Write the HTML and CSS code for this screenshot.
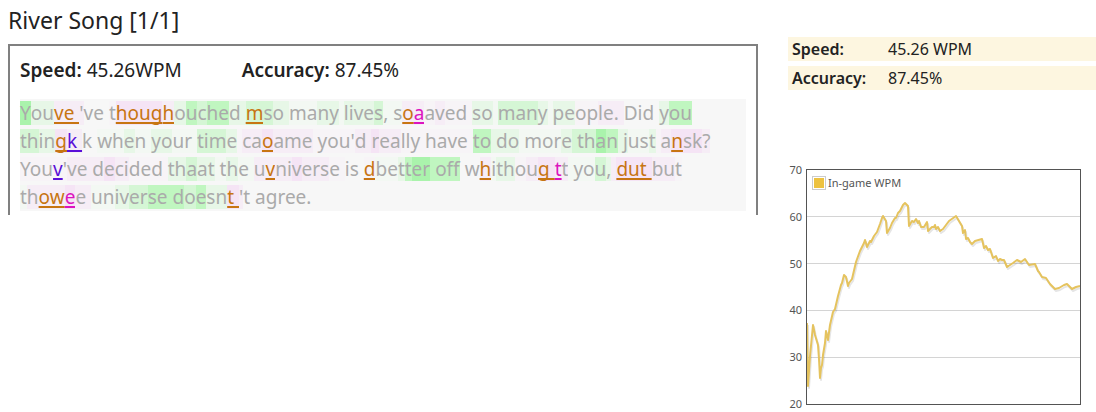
FILE: index.html
```
<!DOCTYPE html>
<html lang="en">
<head>
<meta charset="utf-8">
<title>River Song [1/1]</title>
<link rel="stylesheet" href="styles.css">
</head>
<body>
<div class="page">
<main class="replay">
<h1 class="title">River Song [1/1]</h1>
<section class="panel">
<div class="stats"><p class="stat"><b>Speed:</b> 45.26WPM</p><p class="stat"><b>Accuracy:</b> 87.45%</p></div>
<p class="typed"><span class="g4">Y</span><span class="g1">ou</span><span class="p1 late">ve </span><span class="p1">'</span><span>ve </span><span class="p0">t</span><span class="p2 late">houg</span><span class="p1 late">h</span><span class="g1">o</span><span class="g3">u</span><span class="g2">c</span><span class="g3">he</span><span class="g1">d </span><span class="g2 late">m</span><span class="g2">s</span><span class="g1">o </span><span class="g0">ma</span><span class="g1">ny</span><span class="g0"> </span><span class="g1">live</span><span class="g2">s</span><span class="g0">, s</span><span class="p1 late">o</span><span class="p1 skip">a</span><span class="p0">a</span><span class="p1">v</span><span class="p0">ed </span><span class="g1">so</span><span class="g0"> </span><span class="g2">man</span><span class="g1">y</span><span class="g0"> </span><span class="g1">pe</span><span class="p0">op</span><span class="p1">le. </span><span>Did </span><span class="g1">y</span><span class="g3">ou</span><br>
<span class="g2">th</span><span class="g1">in</span><span class="p2 late">g</span><span class="p1 extra">k </span><span>k </span><span class="g0">wh</span><span class="g1">e</span><span class="g0">n </span><span class="g1">yo</span><span class="g0">ur </span><span class="g2">tim</span><span class="g1">e</span><span class="p0"> </span><span class="p1">ca</span><span class="p2 late">o</span><span class="p1">ame</span><span class="p0"> you'</span><span class="p1">d </span><span class="p2">r</span><span class="p1">ea</span><span class="p0">lly </span><span class="p0">have </span><span class="g3">to</span><span class="g1"> do</span><span class="g0"> mor</span><span class="g1">e</span><span class="g2"> th</span><span class="g4">a</span><span class="g3">n</span><span class="g1"> j</span><span class="g0">us</span><span class="g1">t</span><span class="p0"> </span><span class="p1">a</span><span class="p2 late">n</span><span class="p2">sk</span><span class="p1">?</span><br>
<span class="p0">You</span><span class="p0 extra">v</span><span class="p0">'</span><span class="p1">ve d</span><span class="p2">e</span><span class="p1">ci</span><span class="p0">ded </span><span class="g1">th</span><span class="g2">a</span><span class="g1">at</span><span class="g0"> t</span><span class="g1">h</span><span class="g0">e </span><span class="p1">u</span><span class="p1 late">v</span><span class="p1">ni</span><span class="p2">v</span><span class="p1">ers</span><span class="p0">e </span><span>is </span><span class="p0 late">d</span><span class="g0">be</span><span class="g1">t</span><span class="g3">t</span><span class="g4">er</span><span class="g3"> off</span><span> w</span><span class="p1 late">h</span><span class="g0">i</span><span class="g1">th</span><span class="p0">o</span><span class="p1">u</span><span class="p2 late">g </span><span class="p1 skip">t</span><span class="p1">t</span><span class="g0"> yo</span><span class="g2">u</span><span class="g1">,</span><span class="p1"> </span><span class="p2 late">dut </span><span class="p1">bu</span><span class="p0">t</span><br>
<span class="g0">t</span><span class="p1">h</span><span class="p1 late">ow</span><span class="p2 skip">e</span><span class="p1">e </span><span class="g0">un</span><span class="g1">iv</span><span class="g2">er</span><span class="g3">se d</span><span class="g2">o</span><span class="g3">e</span><span class="g1">sn</span><span class="p2 late">t </span><span class="p1">'</span><span>t agree.</span></p>
</section>
</main>
<aside class="summary">
<dl class="facts">
<div class="fact"><dt>Speed:</dt><dd>45.26 WPM</dd></div>
<div class="fact"><dt>Accuracy:</dt><dd>87.45%</dd></div>
</dl>
<svg class="chart" viewBox="0 0 308 251" role="img" aria-label="In-game WPM">
<defs><path id="wpm" d="M19 163L20 226L22 196L25 165L27 175L30 185L31 199L32 218L33 208L34 205L35 195L37 183L38 171L40 180L42 165L45 152L47 149L50 136L53 125L54 123L56 115L58 117L60 126L61 123L64 119L68 102L72 91L76 83L77 80L78 83L79 87L81 83L82 81L83 82L84 80L86 76L89 72L92 64L94 58L95 56L98 61L99 73L102 68L104 63L107 58L108 58L110 53L112 51L115 45L117 43L120 46L121 66L124 61L126 62L128 59L130 63L131 61L133 67L136 67L139 62L140 71L142 69L144 67L146 67L147 65L148 69L150 67L152 71L155 69L161 61L168 56L174 66L175 73L177 70L178 79L180 78L182 82L184 84L187 81L194 79L196 88L198 86L200 90L202 89L205 98L208 96L210 101L212 99L214 100L216 100L219 107L225 103L229 100L233 102L237 99L241 105L247 104L250 111L251 112L254 117L258 118L262 124L267 129L271 128L276 125L279 124L284 129L288 127L292 126"/></defs>
<g class="grid"><path d="M19 56.500H292M19 103.500H292M19 150.500H292M19 197.500H292"/></g>
<g class="axis"><text x="14" y="14">70</text><text x="14" y="61">60</text><text x="14" y="108">50</text><text x="14" y="154">40</text><text x="14" y="201">30</text><text x="14" y="248">20</text></g>
<g class="curve">
<use class="shade" href="#wpm" x="1" y="2"/>
<use class="line" href="#wpm"/>
</g>
<rect class="frame" x="18.500" y="9.500" width="274" height="235"/>
<rect class="swatch-edge" x="24.500" y="16.500" width="13" height="13"/>
<rect class="swatch" x="26" y="18" width="10" height="10"/>
<text class="legend" x="40" y="27">In-game WPM</text>
</svg>
</aside>
</div>
</body>
</html>
```
FILE: styles.css
```
body {
  margin: 0;
  background: #fff;
  color: #222;
  font-family: "Noto Sans", "Open Sans", sans-serif;
}
.page {
  display: grid;
  grid-template-columns: 750fr 308fr;
  gap: 30px;
  padding-left: 8px;
}
.title {
  margin: 0;
  padding: 4px 0 8px;
  font-size: 23px;
  font-weight: 400;
  line-height: 32px;
}
.panel {
  border: 2px solid #808080;
  border-bottom: 0;
  padding: 9px 10px 4px;
}
.stats {
  display: flex;
  gap: 60px;
  font-size: 19px;
  line-height: 30px;
}
.stat { margin: 0; }
.stat b { font-weight: 600; }
.typed {
  margin: 14px 0 0;
  background: #f7f7f7;
  color: #aaa;
  font-size: 19px;
  line-height: 28px;
  white-space: nowrap;
}
.typed span {
  display: inline-block;
  line-height: 24px;
  white-space: pre;
  text-decoration-thickness: 2px;
  text-underline-offset: 2px;
  text-decoration-skip-ink: none;
}
.g0 { background: #f3f8f3; }
.g1 { background: #e7f7e7; }
.g2 { background: #d5f6d5; }
.g3 { background: #c0f6c0; }
.g4 { background: #aaf3ac; }
.p0 { background: #f7f4f7; }
.p1 { background: #f6edf6; }
.p2 { background: #f5e4f5; }
.late { color: #c77512; text-decoration: underline; }
.skip { color: #dc14bf; text-decoration: underline; }
.extra { color: #5a10d8; text-decoration: underline; }
.summary { padding-top: 37px; }
.facts {
  display: grid;
  gap: 5px;
  margin: 0 0 70px;
  font-size: 16px;
  line-height: 24px;
}
.fact {
  display: grid;
  grid-template-columns: 96px 1fr;
  padding-left: 4px;
  background: #fdf6e0;
}
.fact dt { font-weight: 600; }
.fact dd { margin: 0; }
.chart {
  display: block;
  width: 100%;
}
.frame, .swatch-edge { fill: none; }
.grid { stroke: #d4d4d4; }
.frame { stroke: #545454; }
.axis, .legend {
  fill: #545454;
  font-size: 11px;
}
.axis { text-anchor: end; }
.curve {
  fill: none;
  stroke-linejoin: round;
  stroke-width: 2;
}
.line { stroke: #e5c35e; }
.shade { stroke: #000; stroke-opacity: 0.1; }
.swatch-edge { stroke: #ccc; }
.swatch { fill: #edc240; }
```
